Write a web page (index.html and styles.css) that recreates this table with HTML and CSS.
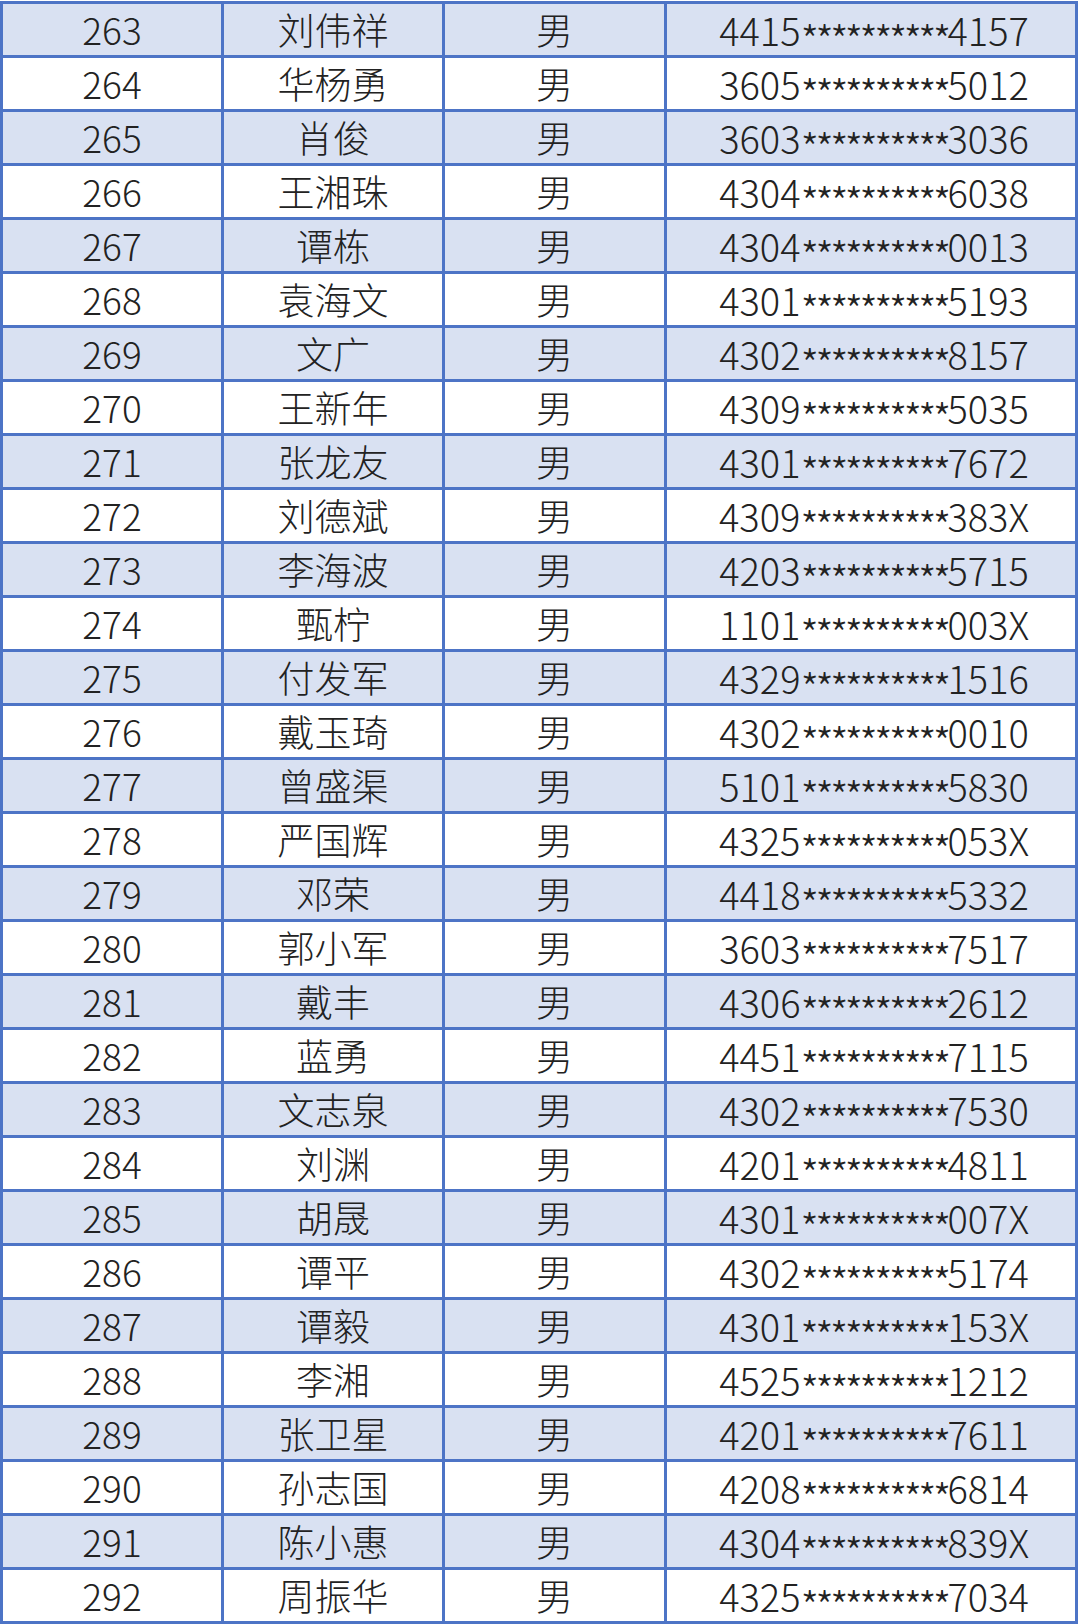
FILE: index.html
```html
<!DOCTYPE html>
<html lang="zh">
<head>
<meta charset="utf-8">
<link rel="stylesheet" href="styles.css">
</head>
<body>
<div class="sheet">
<div class="cell odd">263</div><div class="cell odd">刘伟祥</div><div class="cell odd">男</div><div class="cell odd id">4415<span class="star">**********</span>4157</div>
<div class="cell">264</div><div class="cell">华杨勇</div><div class="cell">男</div><div class="cell id">3605<span class="star">**********</span>5012</div>
<div class="cell odd">265</div><div class="cell odd">肖俊</div><div class="cell odd">男</div><div class="cell odd id">3603<span class="star">**********</span>3036</div>
<div class="cell">266</div><div class="cell">王湘珠</div><div class="cell">男</div><div class="cell id">4304<span class="star">**********</span>6038</div>
<div class="cell odd">267</div><div class="cell odd">谭栋</div><div class="cell odd">男</div><div class="cell odd id">4304<span class="star">**********</span>0013</div>
<div class="cell">268</div><div class="cell">袁海文</div><div class="cell">男</div><div class="cell id">4301<span class="star">**********</span>5193</div>
<div class="cell odd">269</div><div class="cell odd">文广</div><div class="cell odd">男</div><div class="cell odd id">4302<span class="star">**********</span>8157</div>
<div class="cell">270</div><div class="cell">王新年</div><div class="cell">男</div><div class="cell id">4309<span class="star">**********</span>5035</div>
<div class="cell odd">271</div><div class="cell odd">张龙友</div><div class="cell odd">男</div><div class="cell odd id">4301<span class="star">**********</span>7672</div>
<div class="cell">272</div><div class="cell">刘德斌</div><div class="cell">男</div><div class="cell id">4309<span class="star">**********</span>383X</div>
<div class="cell odd">273</div><div class="cell odd">李海波</div><div class="cell odd">男</div><div class="cell odd id">4203<span class="star">**********</span>5715</div>
<div class="cell">274</div><div class="cell">甄柠</div><div class="cell">男</div><div class="cell id">1101<span class="star">**********</span>003X</div>
<div class="cell odd">275</div><div class="cell odd">付发军</div><div class="cell odd">男</div><div class="cell odd id">4329<span class="star">**********</span>1516</div>
<div class="cell">276</div><div class="cell">戴玉琦</div><div class="cell">男</div><div class="cell id">4302<span class="star">**********</span>0010</div>
<div class="cell odd">277</div><div class="cell odd">曾盛渠</div><div class="cell odd">男</div><div class="cell odd id">5101<span class="star">**********</span>5830</div>
<div class="cell">278</div><div class="cell">严国辉</div><div class="cell">男</div><div class="cell id">4325<span class="star">**********</span>053X</div>
<div class="cell odd">279</div><div class="cell odd">邓荣</div><div class="cell odd">男</div><div class="cell odd id">4418<span class="star">**********</span>5332</div>
<div class="cell">280</div><div class="cell">郭小军</div><div class="cell">男</div><div class="cell id">3603<span class="star">**********</span>7517</div>
<div class="cell odd">281</div><div class="cell odd">戴丰</div><div class="cell odd">男</div><div class="cell odd id">4306<span class="star">**********</span>2612</div>
<div class="cell">282</div><div class="cell">蓝勇</div><div class="cell">男</div><div class="cell id">4451<span class="star">**********</span>7115</div>
<div class="cell odd">283</div><div class="cell odd">文志泉</div><div class="cell odd">男</div><div class="cell odd id">4302<span class="star">**********</span>7530</div>
<div class="cell">284</div><div class="cell">刘渊</div><div class="cell">男</div><div class="cell id">4201<span class="star">**********</span>4811</div>
<div class="cell odd">285</div><div class="cell odd">胡晟</div><div class="cell odd">男</div><div class="cell odd id">4301<span class="star">**********</span>007X</div>
<div class="cell">286</div><div class="cell">谭平</div><div class="cell">男</div><div class="cell id">4302<span class="star">**********</span>5174</div>
<div class="cell odd">287</div><div class="cell odd">谭毅</div><div class="cell odd">男</div><div class="cell odd id">4301<span class="star">**********</span>153X</div>
<div class="cell">288</div><div class="cell">李湘</div><div class="cell">男</div><div class="cell id">4525<span class="star">**********</span>1212</div>
<div class="cell odd">289</div><div class="cell odd">张卫星</div><div class="cell odd">男</div><div class="cell odd id">4201<span class="star">**********</span>7611</div>
<div class="cell">290</div><div class="cell">孙志国</div><div class="cell">男</div><div class="cell id">4208<span class="star">**********</span>6814</div>
<div class="cell odd">291</div><div class="cell odd">陈小惠</div><div class="cell odd">男</div><div class="cell odd id">4304<span class="star">**********</span>839X</div>
<div class="cell">292</div><div class="cell">周振华</div><div class="cell">男</div><div class="cell id">4325<span class="star">**********</span>7034</div>
</div>
</body>
</html>
```
FILE: styles.css
```css
html, body {
  margin: 0;
  padding: 0;
  background: #ffffff;
}
.sheet {
  margin-top: 1px;
  width: 1078px;
  box-sizing: border-box;
  display: grid;
  grid-template-columns: 218px 218px 219px 408px;
  grid-auto-rows: 51px;
  gap: 3px;
  padding: 3px;
  background: #4d74c6;
  font-family: "Noto Sans CJK SC", "Noto Sans", sans-serif;
  font-weight: 300;
  font-size: 37px;
  color: #222222;
}
.cell {
  background: #ffffff;
  text-align: center;
  white-space: nowrap;
  line-height: 51px;
}
.cell.odd {
  background: #d9e1f2;
}
.id {
  font-size: 38px;
  padding-left: 6px;
}
.star {
  display: inline-block;
  height: 24px;
  font-size: 42px;
  line-height: 24px;
  letter-spacing: -3.9px;
  vertical-align: -11px;
}
```
